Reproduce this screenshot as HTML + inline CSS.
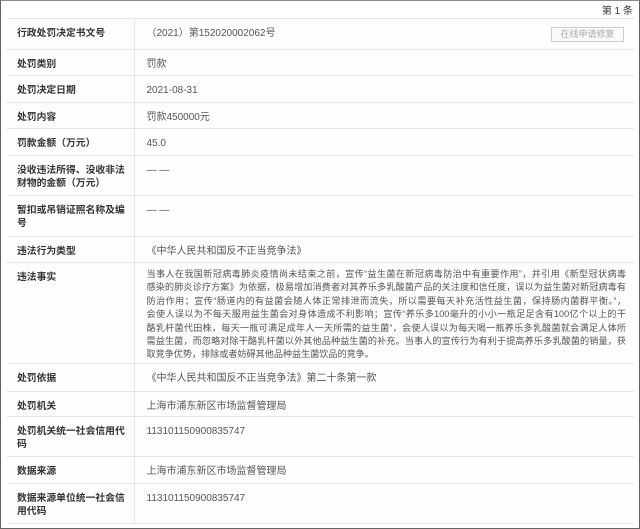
<!DOCTYPE html>
<html><head><meta charset="utf-8"><style>
*{margin:0;padding:0;box-sizing:border-box}
html,body{width:640px;height:529px;overflow:hidden;background:#fff}
body{font-family:"Liberation Sans","Noto Sans CJK SC",sans-serif;color:#444;font-size:10px;position:relative;border:1px solid #666;border-top:1px solid #888}
.top{position:absolute;right:6px;top:1px;font-size:10px;color:#333}
table{position:absolute;left:6px;top:17px;width:627px;border-collapse:collapse;background:#fdfdfd;table-layout:fixed}
td{border-top:1px solid #e6e6e6;vertical-align:top;padding:8px 0 0 10px;line-height:13px;overflow:hidden}
tr:last-child td{border-bottom:1px solid #e6e6e6}
td.l{width:127px;font-weight:bold;color:#333;border-right:1px solid #e6e6e6;padding-right:0;font-size:9.8px;white-space:nowrap}
td.v{padding-left:12px;padding-right:8px;color:#555}
.btn{position:absolute;right:10px;top:8px;width:73px;height:15px;border:1px solid #ccc;color:#aaa;font-size:9px;text-align:center;line-height:13px;background:#fafafa}
.f{font-size:9.1px;line-height:13.4px;padding-top:5px!important}
.f div{white-space:nowrap;text-align:justify;text-align-last:justify;overflow:hidden}
.f div:last-child{text-align-last:left}
</style></head><body>
<div class="top">第 1 条</div>
<table>
<tr style="height:31px"><td class="l">行政处罚决定书文号</td><td class="v" style="position:relative">（2021）第152020002062号<div class="btn">在线申请修复</div></td></tr>
<tr style="height:26px"><td class="l">处罚类别</td><td class="v">罚款</td></tr>
<tr style="height:27px"><td class="l">处罚决定日期</td><td class="v">2021-08-31</td></tr>
<tr style="height:26px"><td class="l">处罚内容</td><td class="v">罚款450000元</td></tr>
<tr style="height:27px"><td class="l">罚款金额（万元）</td><td class="v">45.0</td></tr>
<tr style="height:40px"><td class="l">没收违法所得、没收非法<br>财物的金额（万元）</td><td class="v">— —</td></tr>
<tr style="height:41px"><td class="l">暂扣或吊销证照名称及编<br>号</td><td class="v">— —</td></tr>
<tr style="height:26px"><td class="l">违法行为类型</td><td class="v">《中华人民共和国反不正当竞争法》</td></tr>
<tr style="height:101px"><td class="l">违法事实</td><td class="v f">
<div>当事人在我国新冠病毒肺炎疫情尚未结束之前，宣传“益生菌在新冠病毒防治中有重要作用”，并引用《新型冠状病毒</div>
<div>感染的肺炎诊疗方案》为依据，极易增加消费者对其养乐多乳酸菌产品的关注度和信任度，误以为益生菌对新冠病毒有</div>
<div>防治作用；宣传“肠道内的有益菌会随人体正常排泄而流失，所以需要每天补充活性益生菌，保持肠内菌群平衡。”，</div>
<div>会使人误以为不每天服用益生菌会对身体造成不利影响；宣传“养乐多100毫升的小小一瓶足足含有100亿个以上的干</div>
<div>酪乳杆菌代田株，每天一瓶可满足成年人一天所需的益生菌”，会使人误以为每天喝一瓶养乐多乳酸菌就会满足人体所</div>
<div>需益生菌，而忽略对除干酪乳杆菌以外其他品种益生菌的补充。当事人的宣传行为有利于提高养乐多乳酸菌的销量，获</div>
<div>取竞争优势，排除或者妨碍其他品种益生菌饮品的竞争。</div>
</td></tr>
<tr style="height:28px"><td class="l">处罚依据</td><td class="v">《中华人民共和国反不正当竞争法》第二十条第一款</td></tr>
<tr style="height:25px"><td class="l">处罚机关</td><td class="v">上海市浦东新区市场监督管理局</td></tr>
<tr style="height:40px"><td class="l">处罚机关统一社会信用代<br>码</td><td class="v">113101150900835747</td></tr>
<tr style="height:27px"><td class="l">数据来源</td><td class="v">上海市浦东新区市场监督管理局</td></tr>
<tr style="height:40px"><td class="l">数据来源单位统一社会信<br>用代码</td><td class="v">113101150900835747</td></tr>
</table>
</body></html>
